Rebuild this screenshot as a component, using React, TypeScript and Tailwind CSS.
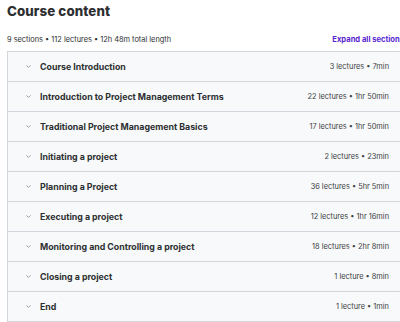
const sections = [
  { title: "Course Introduction", meta: "3 lectures • 7min" },
  { title: "Introduction to Project Management Terms", meta: "22 lectures • 1hr 50min" },
  { title: "Traditional Project Management Basics", meta: "17 lectures • 1hr 50min" },
  { title: "Initiating a project", meta: "2 lectures • 23min" },
  { title: "Planning a Project", meta: "36 lectures • 5hr 5min" },
  { title: "Executing a project", meta: "12 lectures • 1hr 16min" },
  { title: "Monitoring and Controlling a project", meta: "18 lectures • 2hr 8min" },
  { title: "Closing a project", meta: "1 lecture • 8min" },
  { title: "End", meta: "1 lecture • 1min" },
];

function Chevron() {
  return (
    <svg className="w-[7px] h-[7px] text-[#8a8f93]" viewBox="0 0 10 10" fill="none" stroke="currentColor" strokeWidth={1.2}>
      <path d="M2.5 3.8l2.5 2.5 2.5-2.5" strokeLinecap="round" strokeLinejoin="round" />
    </svg>
  );
}

export default function App() {
  return (
    <div className="w-[400px] h-[322px] overflow-hidden bg-white font-['Inter',sans-serif] text-[#2d2f31]">
      <div className="w-[397px] ml-[7px]">
        <h2 className="pt-[2px] text-[13.3px] leading-[18px] font-extrabold tracking-[0.1px]">Course content</h2>
        <div className="mt-[14px] flex items-center justify-between h-[11px]">
          <span className="text-[7.4px] text-[#2d2f31]">9 sections • 112 lectures • 12h 48m total length</span>
          <span className="text-[7.6px] font-bold text-[#5624d0] whitespace-nowrap">Expand all sections</span>
        </div>
        <div className="mt-[6px] border border-[#d1d7dc] border-b-0">
          {sections.map((s) => (
            <div key={s.title} className="h-[30px] flex items-center justify-between bg-[#f7f9fa] border-b border-[#d1d7dc] pl-[17px] pr-[14px]">
              <div className="flex items-center gap-[8px]">
                <Chevron />
                <span className="text-[8.8px] font-bold">{s.title}</span>
              </div>
              <span className="text-[7.4px] text-[#3e4143]">{s.meta}</span>
            </div>
          ))}
        </div>
      </div>
    </div>
  );
}
